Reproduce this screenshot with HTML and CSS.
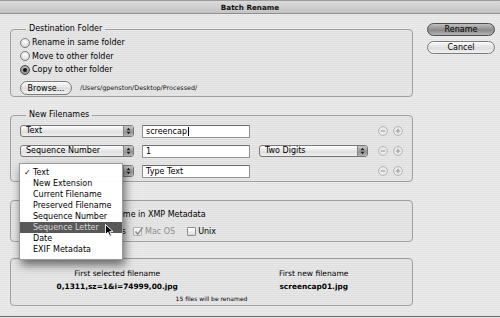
FILE: index.html
```html
<!DOCTYPE html>
<html>
<head>
<meta charset="utf-8">
<link rel="stylesheet" href="styles.css">
</head>
<body>
<div class="window">
  <div class="titlebar">Batch Rename</div>
  <div class="content">
    <div class="main">
      <fieldset class="group g-dest">
        <legend>Destination Folder</legend>
        <div class="radio-row"><span class="radio"></span><span>Rename in same folder</span></div>
        <div class="radio-row"><span class="radio"></span><span>Move to other folder</span></div>
        <div class="radio-row"><span class="radio on"></span><span>Copy to other folder</span></div>
        <div class="browse-row"><span class="btn browse">Browse...</span><span class="path">/Users/gpenston/Desktop/Processed/</span></div>
      </fieldset>

      <fieldset class="group g-names">
        <legend>New Filenames</legend>
        <div class="name-row">
          <span class="popup p-type"><span class="p-label">Text</span><span class="p-arrows"><svg width="5" height="8" viewBox="0 0 5 8"><path d="M0.5 3.2 L2.5 0.8 L4.5 3.2Z M0.5 4.8 L2.5 7.2 L4.5 4.8Z" fill="#222"/></svg></span></span>
          <span class="field">screencap<span class="caret"></span></span>
          <span class="spacer"></span>
          <span class="pm"><svg width="10" height="10" viewBox="0 0 10 10"><circle cx="5" cy="5" r="4.4" fill="#ebebeb" stroke="#b4b4b4"/><path d="M2.8 5 H7.2" stroke="#999" stroke-width="1.1"/></svg></span>
          <span class="pm"><svg width="10" height="10" viewBox="0 0 10 10"><circle cx="5" cy="5" r="4.4" fill="#ebebeb" stroke="#b4b4b4"/><path d="M2.8 5 H7.2 M5 2.8 V7.2" stroke="#999" stroke-width="1.1"/></svg></span>
        </div>
        <div class="name-row">
          <span class="popup p-type"><span class="p-label">Sequence Number</span><span class="p-arrows"><svg width="5" height="8" viewBox="0 0 5 8"><path d="M0.5 3.2 L2.5 0.8 L4.5 3.2Z M0.5 4.8 L2.5 7.2 L4.5 4.8Z" fill="#222"/></svg></span></span>
          <span class="field">1</span>
          <span class="popup p-digits"><span class="p-label">Two Digits</span><span class="p-arrows"><svg width="5" height="8" viewBox="0 0 5 8"><path d="M0.5 3.2 L2.5 0.8 L4.5 3.2Z M0.5 4.8 L2.5 7.2 L4.5 4.8Z" fill="#222"/></svg></span></span>
          <span class="pm"><svg width="10" height="10" viewBox="0 0 10 10"><circle cx="5" cy="5" r="4.4" fill="#ebebeb" stroke="#b4b4b4"/><path d="M2.8 5 H7.2" stroke="#999" stroke-width="1.1"/></svg></span>
          <span class="pm"><svg width="10" height="10" viewBox="0 0 10 10"><circle cx="5" cy="5" r="4.4" fill="#ebebeb" stroke="#b4b4b4"/><path d="M2.8 5 H7.2 M5 2.8 V7.2" stroke="#999" stroke-width="1.1"/></svg></span>
        </div>
        <div class="name-row">
          <span class="popup p-type"><span class="p-label">Text</span><span class="p-arrows"><svg width="5" height="8" viewBox="0 0 5 8"><path d="M0.5 3.2 L2.5 0.8 L4.5 3.2Z M0.5 4.8 L2.5 7.2 L4.5 4.8Z" fill="#222"/></svg></span></span>
          <span class="field">Type Text</span>
          <span class="spacer"></span>
          <span class="pm"><svg width="10" height="10" viewBox="0 0 10 10"><circle cx="5" cy="5" r="4.4" fill="#ebebeb" stroke="#b4b4b4"/><path d="M2.8 5 H7.2" stroke="#999" stroke-width="1.1"/></svg></span>
          <span class="pm"><svg width="10" height="10" viewBox="0 0 10 10"><circle cx="5" cy="5" r="4.4" fill="#ebebeb" stroke="#b4b4b4"/><path d="M2.8 5 H7.2 M5 2.8 V7.2" stroke="#999" stroke-width="1.1"/></svg></span>
        </div>
      </fieldset>

      <fieldset class="group g-options">
        <legend>Options</legend>
        <div class="opt-row"><span class="check"></span><span class="opt-text">Preserve current filename in XMP Metadata</span></div>
        <div class="opt-row">
          <span class="compat-lead">Compatibility: <span class="check"></span>Windows</span>
          <span class="check on disabled"><svg width="9" height="9" viewBox="0 0 9 9"><path d="M1.5 4.5 L3.8 7.2 L8.6 0.4" fill="none" stroke="#8a8a8a" stroke-width="1.4"/></svg></span>
          <span class="dim">Mac OS</span>
          <span class="check unix"></span>
          <span>Unix</span>
        </div>
      </fieldset>

      <fieldset class="group g-preview">
        <legend>Preview</legend>
        <div class="preview-grid">
          <div class="pv-label">First selected filename</div>
          <div class="pv-label">First new filename</div>
          <div class="pv-name">0,1311,sz=1&amp;i=74999,00.jpg</div>
          <div class="pv-name">screencap01.jpg</div>
          <div class="pv-count">15 files will be renamed</div>
        </div>
      </fieldset>
    </div>
    <div class="side">
      <span class="btn default">Rename</span>
      <span class="btn">Cancel</span>
    </div>
  </div>

  <div class="menu">
    <div class="item"><span class="tick">✓</span>Text</div>
    <div class="item"><span class="tick"></span>New Extension</div>
    <div class="item"><span class="tick"></span>Current Filename</div>
    <div class="item"><span class="tick"></span>Preserved Filename</div>
    <div class="item"><span class="tick"></span>Sequence Number</div>
    <div class="item sel"><span class="tick"></span>Sequence Letter</div>
    <div class="item"><span class="tick"></span>Date</div>
    <div class="item"><span class="tick"></span>EXIF Metadata</div>
  </div>
  <svg class="cursor" width="9" height="13" viewBox="0 0 9 13"><path d="M0.5 0.5 L0.5 10.5 L3 8.2 L4.8 12.2 L6.4 11.5 L4.7 7.6 L8 7.6 Z" fill="#000" stroke="#fff" stroke-width="0.9" stroke-linejoin="round"/></svg>
</div>
</body>
</html>
```

FILE: styles.css
```css
* { box-sizing: border-box; }
html, body { margin: 0; padding: 0; }
body {
  width: 500px;
  height: 318px;
  overflow: hidden;
  background: #e6e6e6;
  font-family: "DejaVu Sans", "Liberation Sans", sans-serif;
  font-size: 8px;
  color: #000;
}
.window {
  position: relative;
  width: 500px;
  height: 317px;
  border-bottom: 1px solid #6c6c6c;
  background: repeating-linear-gradient(to bottom, #ebebeb 0 1px, #e3e3e3 1px 2px);
  overflow: hidden;
}
.titlebar {
  height: 14px;
  line-height: 13px;
  text-align: center;
  font-weight: bold;
  font-size: 7.2px;
  color: #111;
  background: linear-gradient(#dadada, #c3c3c3);
  border-top: 1px solid #9a9a9a;
  border-bottom: 1px solid #8e8e8e;
}
.content {
  display: flex;
  padding: 10px 0 0 10px;
}
.main { width: 403px; }
.side {
  margin-left: 14px;
  margin-top: -1px;
  width: 68px;
  display: flex;
  flex-direction: column;
  gap: 5px;
}

.group {
  margin: 0;
  padding: 0 0 0 9px;
  border: 1px solid #a0a0a0;
  border-radius: 4px;
  min-width: 0;
  background: rgba(0,0,0,0.015);
}
.group legend {
  padding: 0 3px;
  margin-left: 6px;
  height: 10px;
  line-height: 10px;
  font-size: 8px;
  color: #000;
}
.g-dest { padding-top: 2px; padding-bottom: 1px; }
.g-names { margin-top: 13px; padding-top: 1px; }
.g-options { margin-top: 13px; padding-top: 2.5px; padding-bottom: 3.5px; }
.g-preview { margin-top: 11px; padding: 3.5px 0 1px 8px; }

.radio-row {
  height: 13.5px;
  display: flex;
  align-items: center;
}
.radio {
  width: 10px;
  height: 10px;
  border-radius: 50%;
  border: 1px solid #7a7a7a;
  background: radial-gradient(circle at 50% 35%, #ffffff, #cdcdcd);
  margin-right: 2px;
  flex: none;
  display: flex;
  align-items: center;
  justify-content: center;
}
.radio.on {
  background: radial-gradient(circle at 50% 35%, #c8c8c8, #7a7a7a);
  border-color: #4a4a4a;
}
.radio.on::after {
  content: "";
  width: 4px;
  height: 4px;
  border-radius: 50%;
  background: #111;
}
.browse-row {
  margin-top: 4.5px;
  height: 14px;
  display: flex;
  align-items: center;
}
.btn {
  display: flex;
  align-items: center;
  justify-content: center;
  height: 13px;
  border: 1px solid #7c7c7c;
  border-radius: 7px;
  background: linear-gradient(#fbfbfb, #dedede 55%, #f2f2f2);
  font-size: 8px;
  color: #000;
}
.browse { width: 52px; height: 14px; }
.path {
  margin-left: 8px;
  font-size: 6.4px;
  color: #111;
}
.btn.default {
  background: linear-gradient(#c0c0c0, #8a8a8a 55%, #b4b4b4);
  border-color: #4e4e4e;
}

.name-row {
  height: 20px;
  display: flex;
  align-items: center;
}
.popup {
  display: flex;
  align-items: stretch;
  height: 12px;
  border: 1px solid #777;
  border-radius: 3px;
  background: linear-gradient(#ffffff, #e0e0e0 60%, #efefef);
  overflow: hidden;
  flex: none;
}
.p-type { width: 114px; }
.p-digits { width: 109px; margin-left: 9px; }
.p-label {
  flex: 1;
  padding-left: 5px;
  line-height: 10px;
  font-size: 8px;
}
.p-arrows {
  width: 10px;
  display: flex;
  align-items: center;
  justify-content: center;
  background: linear-gradient(#c6c6c6, #969696 60%, #b2b2b2);
  border-left: 1px solid #858585;
}
.field {
  margin-left: 8px;
  width: 108px;
  height: 13px;
  border: 1px solid #939393;
  border-top-color: #6c6c6c;
  background: #fff;
  padding-left: 3px;
  line-height: 11px;
  font-size: 8px;
  display: flex;
  align-items: center;
  flex: none;
}
.caret {
  width: 1px;
  height: 9px;
  background: #000;
  margin-left: 1px;
}
.spacer { width: 109px; margin-left: 9px; flex: none; }
.pm { width: 10px; height: 10px; display: flex; flex: none; }
.name-row .pm { margin-left: 5px; }
.name-row .popup + .pm, .name-row .spacer + .pm { margin-left: 10px; }

.opt-row {
  height: 13px;
  display: flex;
  align-items: center;
}
.opt-row + .opt-row { margin-top: 4px; }
.check {
  width: 9px;
  height: 9px;
  border: 1px solid #8a8a8a;
  background: linear-gradient(#ffffff, #dcdcdc);
  border-radius: 1px;
  flex: none;
  display: inline-flex;
  margin-right: 2px;
  overflow: visible;
}
.check.disabled { border-color: #b0b0b0; background: linear-gradient(#fafafa, #e8e8e8); }
.check svg { flex: none; margin-top: -1px; }
.opt-text { margin-left: 1px; }
.compat-lead {
  width: 106px;
  flex: none;
  display: flex;
  justify-content: flex-end;
  align-items: center;
  white-space: nowrap;
  margin-right: 7px;
}
.compat-lead .check { margin-left: 3px; }
.dim { color: #8c8c8c; margin-left: 1px; }
.check.unix { margin-left: 12px; }

.preview-grid {
  display: grid;
  grid-template-columns: 1fr 1fr;
  text-align: center;
}
.pv-label { height: 13px; line-height: 13px; font-size: 7.6px; }
.pv-name { height: 13px; line-height: 13px; font-weight: bold; font-size: 7.4px; }
.pv-count {
  grid-column: 1 / 3;
  height: 11px;
  line-height: 11px;
  font-size: 6px;
  padding-right: 8px;
}

.menu {
  position: absolute;
  left: 19px;
  top: 163px;
  width: 104px;
  padding: 2.5px 0 4px;
  background: rgba(255,255,255,0.98);
  border: 1px solid #9a9a9a;
  box-shadow: 2px 5px 9px rgba(0,0,0,0.55);
}
.item {
  height: 11px;
  line-height: 11px;
  display: flex;
  font-size: 8px;
  color: #000;
  white-space: nowrap;
}
.item.sel { background: #585858; color: #d8d8d8; }
.tick { width: 13px; flex: none; padding-left: 4px; }
.cursor { position: absolute; left: 105px; top: 224px; }
```
